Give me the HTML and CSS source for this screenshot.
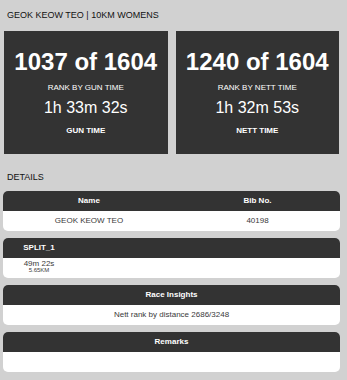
FILE: index.html
```html
<!doctype html>
<html lang="en">
<head>
	<meta charset="UTF-8">
	<title>Result</title>
	<link rel="stylesheet" href="styles.css">
</head>
<body>
	<div class="page">
		<h1 class="title">GEOK KEOW TEO | 10KM WOMENS</h1>
		<div class="cards">
			<div class="card">
				<div class="rank">1037 of 1604</div>
				<div class="label">RANK BY GUN TIME</div>
				<div class="time">1h 33m 32s</div>
				<div class="label label-b">GUN TIME</div>
			</div>
			<div class="card">
				<div class="rank">1240 of 1604</div>
				<div class="label">RANK BY NETT TIME</div>
				<div class="time">1h 32m 53s</div>
				<div class="label label-b">NETT TIME</div>
			</div>
		</div>
		<h2 class="sub">DETAILS</h2>
		<div class="box">
			<div class="box-head cols">
				<span>Name</span>
				<span>Bib No.</span>
			</div>
			<div class="box-body cols">
				<span>GEOK KEOW TEO</span>
				<span>40198</span>
			</div>
		</div>
		<div class="box">
			<div class="box-head split-cols">
				<span>SPLIT_1</span>
			</div>
			<div class="box-body split-body split-cols">
				<div>
					<div class="split-time">49m 22s</div>
					<div class="split-dist">5.65KM</div>
				</div>
			</div>
		</div>
		<div class="box">
			<div class="box-head">Race Insights</div>
			<div class="box-body">Nett rank by distance 2686/3248</div>
		</div>
		<div class="box">
			<div class="box-head">Remarks</div>
			<div class="box-body"></div>
		</div>
	</div>
</body>
</html>
```
FILE: styles.css
```css
html,
body{
	margin: 0;
	height: 100%;
	background: #d1d1d1;
}
body{
	font-family: "Liberation Sans", Arial, sans-serif;
	color: #333;
	overflow: hidden;
}
.page{
	width: 337px;
	padding: 8px 0 0 3px;
}
.title,
.sub{
	margin: 0;
	padding-left: 4px;
	font-size: 9px;
	line-height: 14px;
	font-weight: normal;
	color: #111;
}
.cards{
	display: flex;
	gap: 8px;
	margin: 9px 0 0 1px;
	width: 335px;
}
.card{
	flex: 1;
	height: 123px;
	box-sizing: border-box;
	padding-top: 17px;
	background: #333;
	color: #fff;
	text-align: center;
}
.rank{
	font-size: 24px;
	line-height: 28px;
	font-weight: bold;
}
.label{
	margin-top: 7px;
	font-size: 8px;
	line-height: 10px;
}
.time{
	margin-top: 6px;
	font-size: 16px;
	line-height: 18px;
}
.label-b{
	margin-top: 9px;
	font-weight: bold;
}
.sub{
	margin-top: 16px;
}
.box{
	margin-top: 7px;
	border-radius: 5px;
	overflow: hidden;
	background: #fff;
}
.box-head{
	height: 20px;
	line-height: 20px;
	background: #333;
	color: #fff;
	font-size: 8px;
	font-weight: bold;
	text-align: center;
}
.box-body{
	height: 20px;
	line-height: 20px;
	font-size: 8px;
	text-align: center;
	color: #3a3a3a;
}
.cols{
	display: grid;
	grid-template-columns: 172px 1fr;
}
.split-cols{
	display: grid;
	grid-template-columns: 72px 1fr;
}
.split-body{
	line-height: normal;
	box-sizing: border-box;
	padding-top: 2px;
}
.split-time{
	font-size: 8px;
	line-height: 7px;
}
.split-dist{
	font-size: 6px;
	line-height: 7px;
}
```
